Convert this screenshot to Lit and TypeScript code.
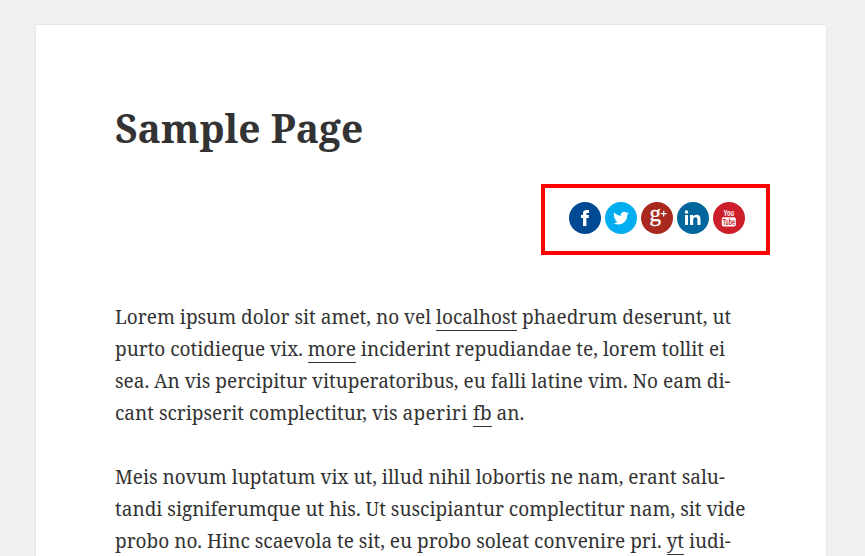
import { LitElement, html, css, svg } from "lit";
import { customElement } from "lit/decorators.js";

interface Run { text: string; link?: boolean; loose?: boolean }

const paragraphs: Run[][][] = [
  [
    [{ text: "Lorem ipsum dolor sit amet, no vel " }, { text: "localhost", link: true }, { text: " phaedrum deserunt, ut" }],
    [{ text: "purto cotidieque vix. " }, { text: "more", link: true }, { text: " inciderint repudiandae te, lorem tollit ei" }],
    [{ text: "sea. An vis percipitur vituperatoribus, eu falli latine vim. No eam di-" }],
    [{ text: "cant scripserit complectitur, vis " }, { text: "aperiri ", loose: true }, { text: "fb", link: true }, { text: " an." }],
  ],
  [
    [{ text: "Meis novum luptatum vix ut, illud nihil lobortis ne nam, erant salu-" }],
    [{ text: "tandi signiferumque ut his. Ut suscipiantur complectitur nam, sit vide" }],
    [{ text: "probo no. Hinc scaevola te sit, eu probo soleat convenire pri. " }, { text: "yt", link: true }, { text: " iudi-" }],
  ],
];

const icons = [
  { name: "Facebook", color: "#004a94", glyph: svg`<path fill="#fff" d="M14 24v-8h-2v-3h2v-1.8C14 8.8 15.2 8 17.3 8H20v3h-1.6c-.8 0-1 .3-1 1v1H20l-.4 3h-2.2v8z"/>` },
  { name: "Twitter", color: "#00adef", glyph: svg`<path fill="#fff" transform="translate(8.2 8.4) scale(.65)" d="M23.95 4.57a10 10 0 0 1-2.82.77 4.96 4.96 0 0 0 2.16-2.72c-.95.56-2 .96-3.13 1.18a4.92 4.92 0 0 0-8.38 4.48C7.69 8.1 4.07 6.13 1.64 3.16a4.93 4.93 0 0 0 1.52 6.57 4.9 4.9 0 0 1-2.23-.61v.06c0 2.39 1.7 4.38 3.95 4.83a5 5 0 0 1-2.21.08 4.94 4.94 0 0 0 4.6 3.42A9.87 9.87 0 0 1 0 19.54a14 14 0 0 0 7.55 2.21c9.05 0 14-7.5 14-13.98l-.02-.64a9.94 9.94 0 0 0 2.42-2.56z"/>` },
  { name: "Google Plus", color: "#a82a1f", glyph: svg`<text class="g" x="8.6" y="19.3">g</text><path fill="none" stroke="#fff" stroke-width="1.3" d="M19.8 11.6h5.8M22.7 8.7v5.8"/>` },
  { name: "LinkedIn", color: "#00669c", glyph: svg`<path fill="#fff" d="M8 13h3v10H8zM13 13h3v1.5c.7-1.1 1.8-1.8 3.4-1.8 3.2 0 4.1 1.8 4.1 4.8V23h-3.1v-5c0-1.7-.3-2.7-1.8-2.7-1.7 0-2.4 1.1-2.4 2.9V23H13z"/><circle cx="9.5" cy="10" r="1.75" fill="#fff"/>` },
  { name: "YouTube", color: "#cc1f2b", glyph: svg`<text class="you" x="10.6" y="14.2" textLength="10.4" lengthAdjust="spacingAndGlyphs">You</text><rect x="8.8" y="15.3" width="14" height="9.2" rx="1.7" fill="#fff"/><text class="tube" x="9.8" y="23.2" textLength="12" lengthAdjust="spacingAndGlyphs">Tube</text>` },
];

@customElement("app-root")
export class AppRoot extends LitElement {
  static styles = css`
    :host { display: block; height: 556px; overflow: hidden; background: #f0f0f0; color: #333; font-family: "Noto Serif", "DejaVu Serif", serif; }
    .page { box-sizing: border-box; width: 790px; height: 700px; margin-left: 36px; padding: 79px 79px 0; background: #fff; box-shadow: 0 0 1px rgba(0, 0, 0, .15), 0 0 2px rgba(0, 0, 0, .05); }
    .shell { padding-top: 25px; }
    h1 { margin: 0; height: 48px; font-size: 39px; line-height: 48px; font-weight: 700; white-space: pre; }
    .share { box-sizing: border-box; width: 229px; height: 71px; margin: 32px -23px 0 auto; border: 4px solid #f00; display: flex; gap: 4px; padding: 14px 0 0 24px; }
    .share svg { width: 32px; height: 32px; flex: none; }
    .g { font: 23px "Liberation Serif", serif; fill: #fff; stroke: #fff; stroke-width: .35px; }
    .you, .tube { font: bold 9.8px "Liberation Sans", sans-serif; fill: #fff; }
    .tube { font-size: 9.4px; fill: #cc1f2b; }
    .text { margin-top: 46px; display: grid; gap: 32px; }
    p { margin: 0; font-size: 19px; }
    .line { display: flex; height: 32px; line-height: 32px; white-space: pre; }
    .run { flex: none; }
    .loose { letter-spacing: .35px; }
    .link { box-sizing: border-box; height: 30px; border-bottom: 1px solid #333; }
  `;

  render() {
    return html`<div class="shell"><main class="page">
      <h1>Sample Page</h1>
      <div class="share">${icons.map((i) => html`<svg viewBox="0 0 32 32" role="img" aria-label=${i.name}><circle cx="16" cy="16" r="16" fill=${i.color}></circle>${i.glyph}</svg>`)}</div>
      <div class="text">${paragraphs.map((p) => html`<p>${p.map((l) => html`<span class="line">${l.map((r) => html`<span class="run ${r.link ? "link" : r.loose ? "loose" : ""}">${r.text}</span>`)}</span>`)}</p>`)}</div>
    </main></div>`;
  }
}
